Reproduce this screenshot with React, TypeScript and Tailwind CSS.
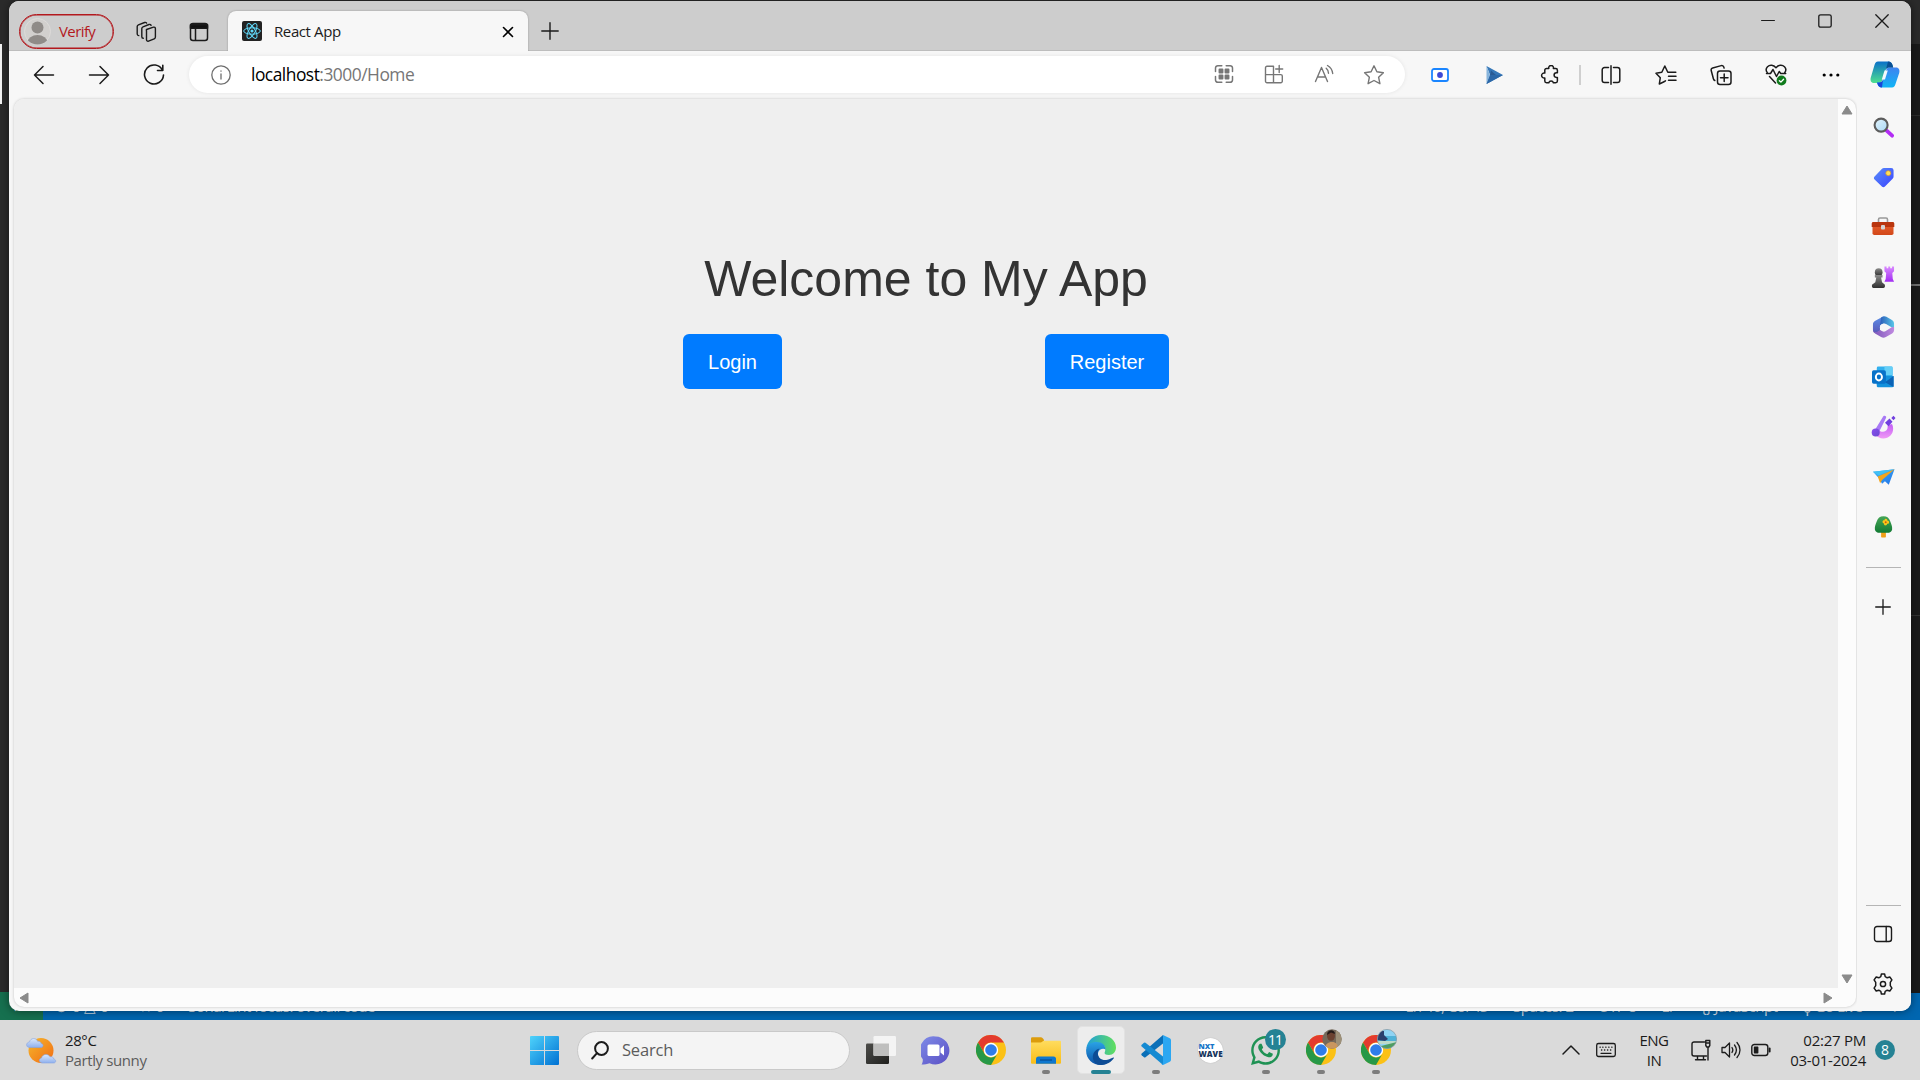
import React from "react";
import { FaWhatsapp } from "react-icons/fa";

type IconProps = { children: React.ReactNode; w?: number; h?: number; box?: string; sw?: number; className?: string };

function Line({ children, w = 20, h = 20, box = "0 0 20 20", sw = 1.5, className = "text-[#1b1b1b]" }: IconProps) {
  return (
    <svg width={w} height={h} viewBox={box} fill="none" stroke="currentColor" strokeWidth={sw} strokeLinecap="round" strokeLinejoin="round" className={`shrink-0 ${className}`}>
      {children}
    </svg>
  );
}

function Art({ children, w = 24, h = 24, box = "0 0 24 24" }: IconProps) {
  return (
    <svg width={w} height={h} viewBox={box} className="block shrink-0">
      {children}
    </svg>
  );
}

function Gradients() {
  const g = (id: string, a: string, b: string, x2 = "1", y2 = "1") => (
    <linearGradient key={id} id={id} x1="0" y1="0" x2={x2} y2={y2}>
      <stop offset="0" stopColor={a} />
      <stop offset="1" stopColor={b} />
    </linearGradient>
  );
  return (
    <svg width="0" height="0" className="absolute">
      <defs>
        {g("gWin", "#4fd3fb", "#0071d3")}
        {g("gTag", "#5b8ff9", "#3a44ff")}
        {g("gLens", "#e2f3fc", "#a9d8f5")}
        {g("gBox", "#e8602c", "#d2481a", "0")}
        {g("gPawn", "#8a8a8a", "#303030", "0")}
        {g("gRook", "#d98bff", "#a22bf2", "0")}
        {g("gCopA", "#0a70c8", "#4fe08f", "0")}
        {g("gCopB", "#3f83f0", "#10b5f5", "0")}
        {g("gSun", "#f5b82e", "#f26b12")}
        {g("gCloud", "#dbe8fb", "#8fb0ee", "0")}
        {g("gChat", "#7f8ce8", "#5a4fc4")}
        {g("gFolder", "#ffdc5e", "#f9bd18", "0")}
        {g("gEdgeTop", "#1f9ede", "#62e05c", "1", "0")}
        {g("gEdgeMid", "#2aa2e6", "#0b50a5", "0")}
        {g("gTree", "#46a657", "#127a33", "0")}
        {g("gPlane", "#42b5f5", "#2072e8")}
        {g("gDark", "#4c4c49", "#20201e")}
        {g("gHexA", "#2b5cb8", "#58c6e8", "1", "0")}
        {g("gHexB", "#7a55b8", "#c08ae0", "1", "0")}
        {g("gHexC", "#5a8fe8", "#5a58b8", "0")}
        {g("gBrush", "#8a4df0", "#6a4ad0")}
        {g("gSwirl", "#c25cf5", "#f09af5", "0")}
      </defs>
    </svg>
  );
}

/* ---------- title bar ---------- */

function TitleBar() {
  return (
    <div className="flex h-[50px] shrink-0 border-b border-[#bdbdbd] bg-[#cdcdcd]">
      <div className="ml-[10px] mt-[13px] flex h-[35px] w-[95px] items-center rounded-full border border-[#b3191e] pl-[4px] shadow-[inset_0_0_0_0.5px_#b3191e]">
        <Art w={27} h={27} box="0 0 27 27">
          <clipPath id="avatar"><circle cx="13.5" cy="13.5" r="13" /></clipPath>
          <circle cx="13.5" cy="13.5" r="13" fill="#d2d0ce" stroke="#dddbd9" />
          <g clipPath="url(#avatar)" fill="#8f8b88">
            <circle cx="13.5" cy="9.5" r="6" />
            <ellipse cx="13.5" cy="24.5" rx="10" ry="7.5" />
          </g>
        </Art>
        <span className="ml-[8px] text-[15px] leading-none tracking-[-0.6px] text-[#b3191e]">Verify</span>
      </div>
      <div className="ml-[21px] flex items-center pt-[12px]">
        <Line w={22} h={22} box="0 0 22 22" sw={1.4}>
          <path d="M11.500 8.500 18.500 6.200c1-.3 1.900.3 1.900 1.300v8.600c0 .8-.4 1.400-1.200 1.700l-5.700 2.300c-1 .4-2-.2-2-1.300V10c0-.8-.5-1.200 0-1.500Z" />
          <path d="M8.300 17.200c-1 0-1.500-.6-1.500-1.500V7.600c0-.8.400-1.500 1.200-1.800l6-2.300c1-.3 1.700 0 2.100.9" />
          <path d="M3.800 14.600c-1-.1-1.600-.7-1.600-1.600V5.600c0-.8.400-1.500 1.200-1.800l6.200-2.300c.9-.3 1.600-.1 2 .6" />
        </Line>
      </div>
      <div className="ml-[32px] flex items-center pt-[12px]">
        <Line w={20} h={20}>
          <rect x="1.500" y="1.500" width="17" height="17" rx="2.500" />
          <path d="M1.500 2.800h17v3.400h-17z" fill="#111" />
          <path d="M6.500 6v12" />
        </Line>
      </div>
      <div className="ml-[19px] mt-[10px] flex h-[40px] w-[300px] items-center rounded-t-[8px] bg-[#f7f7f7] pl-[14px] pr-[14px] shadow-[0_0_2px_rgba(0,0,0,0.3)]">
        <Art w={20} h={20} box="0 0 20 20">
          <rect width="20" height="20" rx="2" fill="#222" />
          <g fill="none" stroke="#61dafb" strokeWidth="1">
            <ellipse cx="10" cy="10" rx="8.300" ry="3.200" />
            <ellipse cx="10" cy="10" rx="8.300" ry="3.200" transform="rotate(60 10 10)" />
            <ellipse cx="10" cy="10" rx="8.300" ry="3.200" transform="rotate(120 10 10)" />
          </g>
          <circle cx="10" cy="10" r="1.600" fill="#61dafb" />
        </Art>
        <span className="ml-[12px] text-[15px] leading-none tracking-[-0.400px] text-[#1b1b1b]">React App</span>
        <Line w={12} h={12} box="0 0 12 12" sw={1.600} className="ml-auto mt-[2px] text-black"><path d="m1.500 1.500 9 9m0-9-9 9" /></Line>
      </div>
      <Line w={18} h={18} box="0 0 18 18" sw={1.400} className="ml-[13px] mt-[21px] text-[#1b1b1b]"><path d="M9 .8v16.400M.8 9h16.400" /></Line>
      <div className="ml-auto mr-[22px] flex gap-[43px] pt-[13px] text-black">
        <Line w={14} h={14} box="0 0 14 14" sw={1.200}><path d="M.6 6.500h12.800" /></Line>
        <Line w={14} h={14} box="0 0 14 14" sw={1.300}><rect x=".8" y=".8" width="12.400" height="12.400" rx="1.800" /></Line>
        <Line w={14} h={14} box="0 0 14 14" sw={1.300}><path d="m.8.8 12.400 12.400m0-12.400L.8 13.200" /></Line>
      </div>
    </div>
  );
}

/* ---------- toolbar ---------- */

function Slot({ children }: { children: React.ReactNode }) {
  return <div className="flex h-full w-[55px] shrink-0 items-center justify-center">{children}</div>;
}

function UrlSlot({ children }: { children: React.ReactNode }) {
  return <div className="flex w-[50px] shrink-0 justify-center">{children}</div>;
}

function Copilot() {
  return (
    <Art w={30} h={27} box="0 0 30 27">
      <path d="M8 .5h10.500c2.300 0 3.300 1.300 4 3.500l.7 2.500h-4c-2 0-3.200 1-3.800 3l-3 9.500c-.7 2-1.700 3-3.700 3H4C1 22 0 19.500.8 16.500L4.500 4C5.200 1.700 6 .5 8 .5Z" fill="url(#gCopA)" />
      <path d="M22 26.500H11.500c-2.300 0-3.300-1.300-4-3.500l-.5-1.500h2.500c2 0 3-1 3.700-3l3-9.500c.6-1.800 1.700-2.500 3.600-2.500H26c3 0 4 2.500 3.200 5.500L25.500 23c-.7 2.300-1.500 3.500-3.500 3.500Z" fill="url(#gCopB)" />
      <path d="M18 .5c2.300 0 3.800 1.300 4.500 3.500l.7 2.500h-4c-1.500 0-2.500.6-3.200 1.700Z" fill="#0a4f94" />
      <path d="M7 21.500h2c2 0 3.400-1 4-3l-1 8c-2.500 0-3.800-1.300-4.500-3.500Z" fill="#1845d8" />
      <path d="M14.500 9.500h3.300L15 18.500h-3.200Z" fill="#f3f8fc" />
    </Art>
  );
}

function Toolbar() {
  return (
    <div className="flex h-[47px] shrink-0 items-center bg-[#f7f7f7] pl-[7px]">
      <Slot><Line w={22} h={20} box="0 0 22 20"><path d="M20.500 10H1.500M10 1.500 1.500 10l8.500 8.500" /></Line></Slot>
      <Slot><Line w={22} h={20} box="0 0 22 20"><path d="M1.500 10h19M12 1.500l8.500 8.500-8.500 8.500" /></Line></Slot>
      <Slot><Line w={22} h={22} box="0 0 22 22" sw={1.600}><path d="M19.500 6.200A9.500 9.500 0 1 0 20.500 11M19.800 1.200v5.300h-5.300" /></Line></Slot>
      <div className="ml-[8px] flex h-[37px] w-[1216px] items-center rounded-full bg-white pl-[22px] pr-[6px] shadow-[0_0_4px_rgba(0,0,0,0.08)]">
        <Line w={20} h={20} sw={1.300} className="text-[#6e6e6e]"><circle cx="10" cy="10" r="9.200" /><path d="M10 9v5M10 6v.2" /></Line>
        <span className="ml-[20px] text-[17.400px] leading-none tracking-[-0.500px] text-[#767676]">
          <span className="text-black">localhost</span>:3000/Home
        </span>
        <div className="ml-auto flex">
          <UrlSlot>
            <Line sw={1.500} className="text-[#767676]">
              <path d="M1.500 7.500V4a2.300 2.300 0 0 1 2.300-2.300h4M12.200 1.700h4A2.300 2.300 0 0 1 18.500 4v3.500M18.500 12.500V16a2.300 2.300 0 0 1-2.300 2.300h-4M7.800 18.300h-4A2.300 2.300 0 0 1 1.500 16v-3.500" />
              <path d="M5.500 5.500h3v3h-3zM11.500 5.500h3v3h-3zM5.500 11.500h3v3h-3zM11.500 11.500h3v3h-3z" fill="currentColor" strokeWidth="1.900" />
            </Line>
          </UrlSlot>
          <UrlSlot>
            <Line sw={1.400} className="text-[#767676]"><path d="M9.500 2.200H3a1.500 1.500 0 0 0-1.500 1.500v13.600a1.500 1.500 0 0 0 1.500 1.500h13.800a1.500 1.500 0 0 0 1.500-1.500v-5.200a1.500 1.500 0 0 0-1.500-1.500H1.500M9.500 2.200v16.600M15.200 1.500v7M11.700 5h7" /></Line>
          </UrlSlot>
          <UrlSlot>
            <Line sw={1.400} className="text-[#767676]"><path d="M1.500 17.500 7.500 3.500l6 14M3.500 13h8M12.200 4.200c1.500 1.200 2.300 2.800 2.300 5M13.500 1.500c3 1.700 4.800 4.300 5.200 8" /></Line>
          </UrlSlot>
          <UrlSlot>
            <Line w={22} h={22} box="0 0 22 22" sw={1.400} className="text-[#767676]"><path d="m11 1.800 2.900 6 6.500.9-4.800 4.500 1.300 6.500-5.900-3.200-5.900 3.200 1.300-6.500L1.600 8.700l6.500-.9z" /></Line>
          </UrlSlot>
        </div>
      </div>
      <div className="w-[7px] shrink-0" />
      <Slot>
        <Art w={18} h={14} box="0 0 18 14"><rect x="1" y="1" width="16" height="12" rx="2" fill="#fff" stroke="#1a85ff" strokeWidth="1.800" /><circle cx="9" cy="7" r="2.900" fill="#3d49d6" /></Art>
      </Slot>
      <Slot>
        <Art w={17} h={18} box="0 0 17 18"><path d="M.5 0 17 9 .5 18 4 9z" fill="#3778b8" /><path d="M.5 0 4 9 .5 18z" fill="#86b4dc" /><path d="M4 9h13L.5 18z" fill="#2c68a8" /><path d="m5 4.500 5 4.500H4z" fill="#2a5c96" /></Art>
      </Slot>
      <Slot>
        <Line><path d="M6.500 3.500h2.300a2.400 2.400 0 1 1 4.600 0h2.300c1 0 1.700.7 1.700 1.700v2.600h-1a2.300 2.300 0 1 0 0 4.600h1V16c0 1-.7 1.700-1.700 1.700h-2.300a2.400 2.400 0 0 0-4.600 0H6.500c-1 0-1.700-.7-1.700-1.700v-3.100a2.500 2.500 0 1 1 0-4.800V5.200c0-1 .7-1.700 1.700-1.700Z" /></Line>
      </Slot>
      <div className="mx-[2px] h-[20px] w-[2px] shrink-0 bg-[#cfcfcf]" />
      <Slot><Line><path d="M7 2.500H3.500a2.300 2.300 0 0 0-2.300 2.300v10.400a2.300 2.300 0 0 0 2.300 2.300H7M13 2.500h3.500a2.300 2.300 0 0 1 2.300 2.300v10.400a2.300 2.300 0 0 1-2.300 2.300H13M10 .8v18.400M7 2.500h.5M12.500 2.500h.5M7 17.500h.5M12.500 17.500h.5" /></Line></Slot>
      <Slot><Line w={22} h={20} box="0 0 22 20"><path d="m8.500 17-4.200 2 1-6.300L1 8.200l5.800-.9L9.800 1l3 6.300h8M13.500 11.300h7.500M13.500 15.300h7.500M8.500 17l2-1.200" /></Line></Slot>
      <Slot><Line w={22} h={22} box="0 0 22 22"><rect x="7.500" y="7" width="13.500" height="13.500" rx="2.500" /><path d="M14.200 10v7.500M10.500 13.800H18M4.800 16.500c-.8-.3-1.200-.9-1.400-1.700L1.200 6.500c-.3-1.200.3-2.300 1.500-2.600l8.500-2.300c1.200-.3 2.300.3 2.600 1.500l.3 1" /></Line></Slot>
      <Slot>
        <Line w={22} h={22} box="0 0 22 22"><path d="M2.200 8.500C.8 6.500 1 4.200 2.500 2.700c2.300-2.200 6-1.900 8.500 1 2.500-2.900 6.200-3.200 8.500-1 1.500 1.500 1.700 3.800.3 5.800M1.500 9.500h4L8 5.500l3.500 7 2.700-5 1.500 2h5M4.500 12.500l6 6.500" /><circle cx="16.500" cy="16.500" r="4.900" fill="#0f7b1c" stroke="none" /><path d="m14.400 16.700 1.500 1.400 2.700-2.900" stroke="#fff" strokeWidth="1.300" /></Line>
      </Slot>
      <Slot><Art w={18} h={4} box="0 0 18 4"><circle cx="2.200" cy="2" r="1.600" /><circle cx="9" cy="2" r="1.600" /><circle cx="15.800" cy="2" r="1.600" /></Art></Slot>
      <div className="flex flex-1 justify-center"><Copilot /></div>
    </div>
  );
}

/* ---------- sidebar ---------- */

const sideIcons: React.ReactNode[] = [
  <Art key="search" w={23} h={23}><path d="m15 15 6 5.500" stroke="#b32df5" strokeWidth="4" strokeLinecap="round" /><circle cx="9.500" cy="9.500" r="6.800" fill="url(#gLens)" stroke="#5c5c5c" strokeWidth="2.200" /></Art>,
  <Art key="tag" w={23} h={23}><path d="M12.500 2H20a2.500 2.500 0 0 1 2.500 2.500v6.500c0 1-.3 1.600-1 2.300l-8 8c-1 1-2.200 1-3.200 0l-7.600-7.200c-1-1-1-2.200 0-3.200l7.500-7.700c.7-.8 1.400-1.200 2.300-1.200Z" fill="url(#gTag)" /><circle cx="17" cy="7.500" r="2.600" fill="#ffdf5a" stroke="#d99c2a" strokeWidth=".8" /></Art>,
  <Art key="toolbox"><path d="M7.500 7V4.500A1.500 1.500 0 0 1 9 3h6a1.500 1.500 0 0 1 1.500 1.500V7" fill="none" stroke="#999" strokeWidth="1.600" /><rect x="1.500" y="7.500" width="21" height="12.500" rx="1.800" fill="url(#gBox)" /><path d="M.7 9C.7 7.500 1.200 7 2.700 7h18.600c1.500 0 2 .5 2 2v3H.7z" fill="#b9350e" /><rect x="10" y="10" width="4" height="4.500" rx="1" fill="#d4d4d4" /></Art>,
  <Art key="chess" w={24} box="0 0 25 24"><path d="M14 1h2.200v2h1.800V1h2v2h1.800V1H24v5l-1.800 1.800.5 6.200 1.300 3H14l1.300-3 .5-6.200L14 6z" fill="url(#gRook)" /><circle cx="8" cy="7" r="4" fill="url(#gPawn)" /><path d="M4 10h8v2.500h-1.500l1 5 3 2.500v2c0 .8-.7 1.500-1.500 1.500H2.500C1.700 23.500 1 22.800 1 22v-2l3.500-2.500 1-5H4z" fill="url(#gPawn)" /></Art>,
  <Art key="m365" w={23} h={24}>
    <path d="M12 .8 3 5.800C1.700 6.600 1 7.700 1 9.300v5.900c0 1.800 1 2.800 2.500 2.800 1 0 2-.4 3-1l1.800-1v-4c0-1.300.5-2.200 1.600-2.900L15 6z" fill="url(#gHexC)" />
    <path d="M9.500 2.200 11 1.300c1.400-.7 2.700-.7 4 0l5.800 3.300c1.500.9 2.200 2 2.200 3.700v7.500c0-1.300-.7-2.300-1.800-3l-6.500-3.900c-1.200-.7-2.400-.7-3.600-.1L8.300 10.500z" fill="url(#gHexA)" />
    <path d="M23 12v3.200c0 1.600-.7 2.700-2 3.500l-6.500 3.700c-1.700 1-3.300 1-5 0L3.200 18.800C2 18 1.300 17 1.100 15.700c1 2 3 2.100 5 .9l2.500-1.500 2.200 1.300c1 .6 2.200.6 3.200 0l7-4.300z" fill="url(#gHexB)" />
    <circle cx="12" cy="12.200" r="3.700" fill="#f7f7f7" />
  </Art>,
  <Art key="outlook" w={23}><rect x="5" y="1" width="16.500" height="20" rx="1.500" fill="#32b0ee" /><path d="M13 1h7c1 0 1.500.5 1.500 1.500V10H13z" fill="#65cff7" /><path d="M5 11h17.500v10.500c0 .8-.5 1.200-1.200 1.200H6c-.7 0-1-.4-1-1.200z" fill="#1391dc" /><path d="m22.500 11-9 6.500 9 5z" fill="#0b62b5" /><rect x="0" y="5" width="14.500" height="14" rx="1.700" fill="#0872c9" /><ellipse cx="7.200" cy="12" rx="3.200" ry="3.600" fill="none" stroke="#fff" strokeWidth="2" /></Art>,
  <Art key="designer" w={25} box="0 0 25 24">
    <path d="M2.500 17c1.500 1 4 .5 5.500-2 .6 1.200 2.300 2 4.200 1.800 3.300-.3 5-3 4.300-6.300l4.500-1.500c2 4 1.300 8.500-1.500 11.500-3.200 3.300-8 4-12 1.800-2.300-1.300-4-2.800-5-5.300Z" fill="url(#gSwirl)" />
    <path d="M14.200 1c-1.200-.5-2 .3-2.500 1.200L4.500 14l4 2L15 3c.5-1 .2-1.600-.8-2Z" fill="#a879f5" />
    <circle cx="4.700" cy="17.500" r="4" fill="url(#gBrush)" />
    <path d="m18.500 3.500 3 3.300-4 4.500-3.500-3.500zM22.500.8 24.500 3l-2 2.200L20.300 3z" fill="#713fdf" />
  </Art>,
  <Art key="drop" w={23}><path d="M1 6.500 23.500 4 17.500 20l-4-3.500-3 2.500-3-5.500z" fill="url(#gPlane)" /><path d="M23.500 4 7 10.500 1 6.500z" fill="#41c1f3" /><path d="M23.500 4 6 11.500l2.500 7 2-3.500z" fill="#f3a51d" /></Art>,
  <Art key="tree" w={23}><rect x="9.500" y="16" width="5" height="7" rx=".8" fill="#f0a019" /><path d="M12 .8c3.800 0 6 2 7 5.200 1.300 3 2.300 6 2 8.500-.4 2.300-2.500 3.500-5 3.500H8c-2.500 0-4.600-1.200-5-3.500-.3-2.500.7-5.500 2-8.500C6 2.800 8.200.8 12 .8Z" fill="url(#gTree)" /><path d="M14 3.500c1.500-.2 2 .8 1.900 1.800 1.300.2 2.300 1 1.900 2.200-.3 1-1.200 1.300-2 1.200-.2 1.200-1 1.800-2 1.600s-1.400-1-1.200-2c-1.200-.2-1.800-1-1.600-2s1-1.300 2-1.200c0-.9.300-1.400 1-1.600Z" fill="#fbc61a" /><circle cx="14.300" cy="7" r="1" fill="#c65b10" /></Art>,
];

function Sidebar() {
  return (
    <div className="flex w-[54px] shrink-0 flex-col items-center bg-[#f7f7f7] pr-[2px] pt-[4px]">
      {sideIcons.map((icon, i) => (
        <div key={i} className="flex h-[50px] items-center justify-center">{icon}</div>
      ))}
      <div className="mt-[15px] h-px w-[35px] bg-[#b5b5b5]" />
      <div className="mt-[14px] flex h-[50px] items-center"><Line w={16} h={16} box="0 0 16 16" sw={1.300}><path d="M8 .7v14.600M.7 8h14.600" /></Line></div>
      <div className="mt-auto h-px w-[35px] bg-[#b5b5b5]" />
      <div className="mt-[3px] flex h-[50px] items-center">
        <Line w={20} h={18} box="0 0 20 18" sw={1.400}><rect x="1.500" y="1.500" width="17" height="15" rx="2.500" /><path d="M13.200 1.500v15" /></Line>
      </div>
      <div className="mb-[2px] flex h-[50px] items-center">
        <Line w={22} h={22} box="0 0 22 22" sw={1.500}>
          <path d="M9.400 1h3.200l.6 2.700 2 1.100 2.600-.8 2.100 2.900L18.300 9.300v3.400l1.600 2.400-2.100 2.900-2.600-.8-2 1.100-.6 2.700H9.400l-.6-2.700-2-1.100-2.600.8-2.100-2.900 1.600-2.400V9.300L2.100 6.900 4.200 4l2.600.8 2-1.100z" />
          <circle cx="11" cy="11" r="2.600" />
        </Line>
      </div>
    </div>
  );
}

/* ---------- web page ---------- */

function Tri({ d, w, h }: { d: string; w: number; h: number }) {
  return <svg width={w} height={h} className="block shrink-0"><path d={d} fill="#8b8b8b" stroke="#8b8b8b" strokeLinejoin="round" /></svg>;
}

function Viewport() {
  return (
    <div className="ml-[5px] mt-px flex h-[908px] w-[1842px] flex-col overflow-hidden rounded-[10px] bg-[#fcfcfc] shadow-[0_0_3px_rgba(0,0,0,0.22)]">
      <div className="flex flex-1">
        <main className="flex w-[1824px] flex-col items-center bg-[#efefef] font-['Liberation_Sans',Arial,sans-serif]">
          <h1 className="mt-[150px] whitespace-nowrap text-[50px] leading-[60px] text-[#333]">Welcome to My App</h1>
          <div className="mt-[25px] flex w-[486px] justify-between">
            <button className="h-[55px] w-[99px] rounded-[6px] bg-[#007bff] text-[20px] text-white">Login</button>
            <button className="h-[55px] w-[124px] rounded-[6px] bg-[#007bff] text-[20px] text-white">Register</button>
          </div>
        </main>
        <div className="flex flex-1 flex-col items-center justify-between pb-[4px] pt-[6px]">
          <Tri w={12} h={10} d="M6 1 11 9H1z" />
          <Tri w={12} h={10} d="M1 1h10L6 9z" />
        </div>
      </div>
      <div className="flex h-[19px] items-center justify-between pl-[5px] pr-[23px]">
        <Tri w={10} h={12} d="M1 6 9 1v10z" />
        <Tri w={10} h={12} d="M1 1v10l8-5z" />
      </div>
    </div>
  );
}

/* ---------- editor behind the browser ---------- */

function EditorBackdrop() {
  return (
    <div className="absolute inset-x-0 top-0 flex h-[1020px] flex-col bg-[#2b2b2b]">
      <div className="flex flex-1 justify-between">
        <div className="mt-[44px] h-[60px] w-[2px] bg-[#f5f5f5]" />
        <div className="mt-[44px] w-[9px] bg-[#1a1a1a]">
          <div className="mt-[71px] h-px bg-[#2c2c2c]" />
          <div className="mt-[168px] h-[2px] bg-[#707070]" />
          <div className="mt-[329px] h-px bg-[#333]" />
        </div>
      </div>
      <div className="flex h-[27px] shrink-0 items-center bg-[#0066b0] pb-[1px] text-[15px] text-[#d0dfea]">
        <div className="flex h-[28px] w-[43px] items-center bg-[#16704f] pl-[14px]">›</div>
        <span className="ml-[12px]">⊗ 0 △ 0</span>
        <span className="ml-[30px]">☆ 0</span>
        <span className="ml-[24px] whitespace-nowrap tracking-[-0.500px]">SonarLint focus: overall code</span>
        <div className="ml-auto flex gap-[25px] whitespace-nowrap pr-[20px] tracking-[-0.500px]">
          <span>Ln 46, Col 43</span><span>Spaces: 2</span><span>UTF-8</span><span>LF</span><span>{"{}"} JavaScript</span><span>ϙ Go Live</span><span>♤</span>
        </div>
      </div>
    </div>
  );
}

/* ---------- taskbar ---------- */

function Chrome() {
  return (
    <Art w={30} h={30} box="0 0 30 30">
      <circle cx="15" cy="15" r="15" fill="#fbc116" />
      <path d="M2 7.500a15 15 0 0 1 26 0H15a7.500 7.500 0 0 0-6.500 11.250z" fill="#e33b2e" />
      <path d="M2 7.500 8.500 18.750A7.500 7.500 0 0 0 21.500 18.750L15 30A15 15 0 0 1 2 7.500Z" fill="#279847" />
      <circle cx="15" cy="15" r="7.200" fill="#fff" /><circle cx="15" cy="15" r="5.800" fill="#2f7de9" />
    </Art>
  );
}

function TaskItem({ children, mark, active }: { children?: React.ReactNode; mark?: boolean; active?: boolean }) {
  return (
    <div className="flex w-[55px] shrink-0 justify-center">
      <div className={active ? "relative flex h-[48px] w-[48px] items-center justify-center rounded-[5px] border border-[#e2e2e2] bg-[#ededed]" : "relative flex h-[48px] w-[48px] items-center justify-center"}>
        {children}
        {mark && <span className={active ? "absolute -bottom-px h-[4px] w-[20px] rounded-full bg-[#258294]" : "absolute bottom-0 h-[4px] w-[8px] rounded-full bg-[#7d7d7d]"} />}
      </div>
    </div>
  );
}

function Taskbar() {
  return (
    <div className="absolute inset-x-0 bottom-0 flex h-[60px] items-center bg-[#dadada] text-[#1b1b1b]">
      <div className="flex w-[530px] shrink-0 items-center pl-[25px]">
        <Art w={32} h={30} box="0 0 32 30">
          <circle cx="16" cy="15.500" r="12.500" fill="url(#gSun)" />
          <path d="M4.500 12.500C1.500 12.500.5 9 3 7.500c.5-.4 1-.5 1.500-.5 1-4.500 7-4.500 8-.8 2.500-.3 3.500 1 3.500 2.200 3 .5 2.500 4.100 0 4.100Z" fill="url(#gCloud)" stroke="#86a5e0" strokeWidth=".6" />
          <path d="M17.500 28c-3.500 0-4.300-4.300-1-5 .7-4 6.500-5 8.500-1.200 2.500-.6 3.700 1 3.700 2.200 3 .6 2.300 4 0 4Z" fill="url(#gCloud)" stroke="#86a5e0" strokeWidth=".6" />
        </Art>
        <div className="ml-[8px] text-[15px] leading-[20px] tracking-[-0.400px]">
          <div>28°C</div>
          <div className="text-[#5c5c5c]">Partly sunny</div>
        </div>
      </div>
      <Art w={29} h={29} box="0 0 29 29"><path d="M1 0h13v14H0V1q0-1 1-1Zm14 0h13q1 0 1 1v13H15zM0 15h14v14H1q-1 0-1-1zm15 0h14v13q0 1-1 1H15z" fill="url(#gWin)" /></Art>
      <div className="ml-[18px] mr-[3px] flex h-[39px] w-[273px] shrink-0 items-center rounded-full border border-[#c9c9c9] bg-[#f4f4f4] pl-[13px]">
        <Line w={18} h={19} box="0 0 18 19" sw={2}><circle cx="10.500" cy="7.500" r="6.400" /><path d="M6 12.200 1.200 17.500" /></Line>
        <span className="ml-[13px] text-[16.500px] leading-none tracking-[-0.200px] text-[#5c5c5c]">Search</span>
      </div>
      <TaskItem>
        <Art w={30} h={28} box="0 0 30 28"><rect x="0" y="7.500" width="23" height="20.500" rx="1.200" fill="url(#gDark)" /><rect x="7.500" y="0" width="22.500" height="20" rx="1.200" fill="#f4f4f4" /><path d="M7.500 7.500H23V20H8.700q-1.200 0-1.200-1.200z" fill="#bfbfbe" /></Art>
      </TaskItem>
      <TaskItem>
        <Art w={29} h={29} box="0 0 29 29"><path d="M14.500.5a14 14 0 1 1-6 26.700c-2 .9-5 1.300-8 1.300 1-1.500 1.500-3.500 1.200-5.500A14 14 0 0 1 14.500.5Z" fill="url(#gChat)" /><rect x="6.500" y="8.500" width="12" height="11.500" rx="1.500" fill="#fff" /><path d="m19.500 12.500 3.500-3v10l-3.500-3z" fill="#fff" /></Art>
      </TaskItem>
      <TaskItem><Chrome /></TaskItem>
      <TaskItem mark>
        <Art w={30} h={27} box="0 0 30 27"><path d="M0 1.500Q0 .3 1.200.3h8.600q1 0 1.700.7l1.500 1.800V8H0z" fill="#dc9c0c" /><path d="M0 5.500h9.500q1 0 1.700-.7l1.200-1H29q1 0 1 1v21q0 1-1 1H1q-1 0-1-1z" fill="url(#gFolder)" /><path d="M5 26.800V22q0-2.500 2.500-2.500h15q2.500 0 2.500 2.500v4.800z" fill="#0f78cf" /><path d="M9 23h12" stroke="#0a4c90" strokeWidth="1.200" /></Art>
      </TaskItem>
      <TaskItem mark active>
        <Art w={30} h={30} box="0 0 30 30">
          <path d="M.3 13.500C1.500 5.500 7.500 0 15 0c9 0 15 6 15 12.500 0 4.500-3 7.500-7 7.500-3.500 0-5-1.300-4.300-2.700 1.700-2.800.2-9.300-7.200-9.300-5 0-8.500 2.500-11.200 5.500Z" fill="url(#gEdgeTop)" />
          <path d="M.2 14C1.500 9.500 6 7 10.500 7c6 0 9 3.500 9 7.500-1.700-1.500-6.500-1-7.500 3.500-.5 5 4.500 9.500 10 9.300-2 1.700-4.500 2.700-7 2.700C6 30-.8 23 .2 14Z" fill="url(#gEdgeMid)" />
          <path d="M11.800 18c-.3 5.500 5 8 9.700 6.700 2.500-.7 4.500-2 5.700-2.300.6-.1.900.3.600.9C25.500 27 20.500 30 15 30 9 30 6 25 7 20c.5-2.500 2.500-5.500 6.500-6.500-1 1.200-1.600 2.500-1.700 4.500Z" fill="#0d4c95" />
        </Art>
      </TaskItem>
      <TaskItem mark>
        <Art w={30} h={30} box="0 0 30 30"><path d="M22 0v8.500L4.500 22.300q-.8.600-1.500 0L.7 20.200q-.9-.9 0-1.700z" fill="#0a6fb8" /><path d="M22 30v-8.500L4.500 7.700q-.8-.6-1.500 0L.7 9.800q-.9.900 0 1.700z" fill="#148ad2" /><path d="m22 0 6.800 3.200q1.200.6 1.200 2v19.600q0 1.400-1.200 2L22 30q-1 0-1.500-.8.900.2 1.500-.7z" fill="#2ba7f2" /></Art>
      </TaskItem>
      <TaskItem>
        <div className="flex h-[25px] w-[25px] flex-col items-center justify-center rounded-full bg-white text-[7.500px] font-extrabold leading-[7.500px] text-[#17355c] shadow-[0_0_1px_rgba(0,0,0,0.3)]">
          <span className="mr-[8px] text-[#1676c8]">NXT</span>
          <span className="text-[8px]">WAVE</span>
        </div>
      </TaskItem>
      <TaskItem mark>
        <FaWhatsapp className="h-[33px] w-[33px] text-[#1f9254]" />
        <span className="absolute right-[4px] top-[3px] flex h-[21px] w-[21px] items-center justify-center rounded-full bg-[#258294] text-[14px] leading-none tracking-[-1px] text-white">11</span>
      </TaskItem>
      <TaskItem mark>
        <Chrome />
        <span className="absolute right-[3px] top-[3px] block h-[20px] w-[20px]">
          <Art w={20} h={20} box="0 0 20 20"><clipPath id="p1"><circle cx="10" cy="10" r="9.700" /></clipPath><g clipPath="url(#p1)"><path fill="#75695a" d="M0 0h20v20H0z" /><path fill="#9d9078" d="M14 0h6v20h-6z" /><ellipse cx="9" cy="7" rx="4" ry="4.800" fill="#6b4130" /><path d="M5 6c0-6 8-6 8-1L9 3.500Z" fill="#241b19" /><path d="M3 20c0-5 3-7 7-7s6 2 6 7z" fill="#c9965f" /></g></Art>
        </span>
      </TaskItem>
      <TaskItem mark>
        <Chrome />
        <span className="absolute right-[3px] top-[3px] block h-[20px] w-[20px]">
          <Art w={20} h={20} box="0 0 20 20"><clipPath id="p2"><circle cx="10" cy="10" r="9.700" /></clipPath><g clipPath="url(#p2)"><path fill="#8fd3f3" d="M0 0h20v20H0z" /><path fill="#4fb2d8" d="M0 7h20v5H0z" /><path fill="#bcd9c9" d="M0 12h20v3H0z" /><path fill="#4d9d62" d="m0 18 20-5v7H0z" /><path fill="#2b3f6c" d="M0 7 4 2l3 0 0 4 4 4-3 2-8-1z" /></g><circle cx="10" cy="10" r="9.600" fill="none" stroke="#8a9aa0" strokeWidth=".7" /></Art>
        </span>
      </TaskItem>
      <div className="ml-auto flex shrink-0 items-center pr-[25px]">
        <Line sw={1.500}><path d="m2 14 8-8 8 8" /></Line>
        <Line sw={1.300} className="ml-[15px] text-[#1b1b1b]"><rect x=".7" y="3.500" width="18.600" height="13" rx="1.800" /><path d="M4 7.200h.3m2.400 0h.3m2.700 0h.3m2.700 0h.3m2.700 0h.3M5.500 10h.3m2.700 0h.3m2.700 0h.3m2.700 0h.3M5 13.300h10" /></Line>
        <div className="ml-[20px] w-[36px] text-center text-[15px] leading-[20px] tracking-[-0.500px]"><div>ENG</div><div>IN</div></div>
        <Line w={20} h={22} box="0 0 20 22" sw={1.400} className="ml-[19px] text-[#1b1b1b]"><path d="M13.500 3H3A2 2 0 0 0 1 5v10a2 2 0 0 0 2 2h12.500M6.500 17v3.500m6-3.500v3.500M4.500 20.700h10M14.800 1.500h4v5l-1 1.500h-2l-1-1.500zM14.800 4h4M17 8v13" /></Line>
        <Line w={20} h={20} sw={1.300} className="ml-[10px] text-[#1b1b1b]"><path d="M1 7.500h3L8.500 3v14L4 12.500H1zM11 7.500c1 1.500 1 3.500 0 5M13.500 5c2.300 3 2.300 7 0 10M16 2.500c4 4.500 4 10.500 0 15" /></Line>
        <Line w={20} h={14} box="0 0 20 14" sw={1.400} className="ml-[10px] text-[#1b1b1b]"><rect x=".8" y="1.500" width="16" height="11" rx="2.500" /><path d="M3.500 4.200h3.200v5.600H3.500z" fill="currentColor" /><path d="M18.600 5.500v3" strokeWidth="2" /></Line>
        <div className="w-[95px] whitespace-nowrap text-right text-[15px] leading-[20px] tracking-[-0.250px]"><div>02:27 PM</div><div>03-01-2024</div></div>
        <div className="ml-[9px] flex h-[20px] w-[20px] items-center justify-center rounded-full bg-[#258294] text-[14px] leading-none text-white">8</div>
      </div>
    </div>
  );
}

export default function App() {
  return (
    <div className="relative h-[1080px] w-[1920px] overflow-hidden bg-[#2b2b2b] font-['Open_Sans','Noto_Sans',sans-serif]">
      <Gradients />
      <EditorBackdrop />
      <div className="relative ml-[9px] mt-px flex h-[1010px] w-[1902px] flex-col overflow-hidden rounded-[10px] bg-[#f7f7f7] shadow-[0_0_10px_rgba(0,0,0,0.5)]">
        <TitleBar />
        <Toolbar />
        <div className="flex min-h-0 flex-1">
          <Viewport />
          <div className="w-px" />
          <Sidebar />
        </div>
      </div>
      <Taskbar />
    </div>
  );
}
